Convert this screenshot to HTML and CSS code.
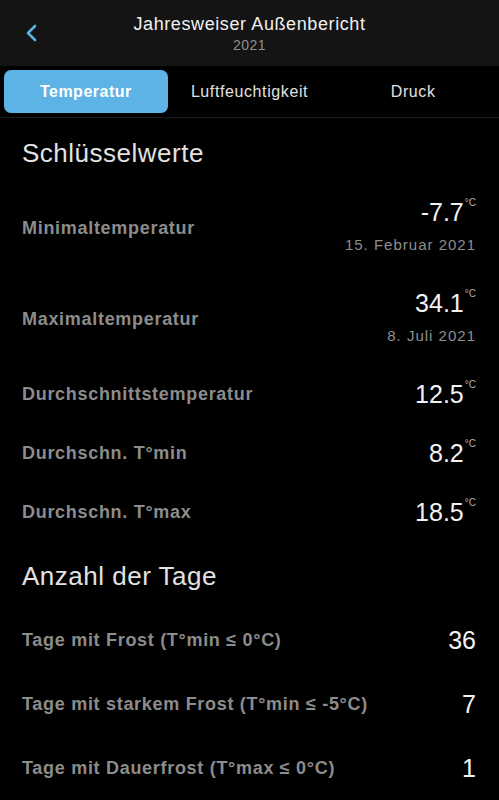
FILE: index.html
```html
<!DOCTYPE html>
<html lang="de">

<head>
  <meta charset="UTF-8">
  <meta name="viewport" content="width=device-width, initial-scale=1.0">
  <title>Jahresweiser Außenbericht</title>
  <link rel="stylesheet" href="styles.css">
</head>

<body>
  <header class="topbar">
    <a class="back" href="#" aria-label="Zurück">
      <svg width="16" height="20" viewBox="0 0 16 20"><polyline points="11,3 4,10 11,17" fill="none" stroke="#5ab2e3" stroke-width="2.6" stroke-linecap="round" stroke-linejoin="round"/></svg>
    </a>
    <div class="title">
      <div class="title-main">Jahresweiser Außenbericht</div>
      <div class="title-sub">2021</div>
    </div>
    <div></div>
  </header>

  <nav class="tabs">
    <div class="tab active">Temperatur</div>
    <div class="tab">Luftfeuchtigkeit</div>
    <div class="tab">Druck</div>
  </nav>

  <main class="content">
    <h2 class="section">Schlüsselwerte</h2>

    <div class="row">
      <div class="label">Minimaltemperatur</div>
      <div class="value-box">
        <div class="value">-7.7<sup>°C</sup></div>
        <div class="date">15. Februar 2021</div>
      </div>
    </div>

    <div class="row">
      <div class="label">Maximaltemperatur</div>
      <div class="value-box">
        <div class="value">34.1<sup>°C</sup></div>
        <div class="date">8. Juli 2021</div>
      </div>
    </div>

    <div class="row">
      <div class="label">Durchschnittstemperatur</div>
      <div class="value">12.5<sup>°C</sup></div>
    </div>

    <div class="row">
      <div class="label">Durchschn. T°min</div>
      <div class="value">8.2<sup>°C</sup></div>
    </div>

    <div class="row">
      <div class="label">Durchschn. T°max</div>
      <div class="value">18.5<sup>°C</sup></div>
    </div>

    <h2 class="section second">Anzahl der Tage</h2>

    <div class="row days">
      <div class="label">Tage mit Frost (T°min ≤ 0°C)</div>
      <div class="value">36</div>
    </div>

    <div class="row days">
      <div class="label">Tage mit starkem Frost (T°min ≤ -5°C)</div>
      <div class="value">7</div>
    </div>

    <div class="row days">
      <div class="label">Tage mit Dauerfrost (T°max ≤ 0°C)</div>
      <div class="value">1</div>
    </div>
  </main>
</body>

</html>
```

FILE: styles.css
```css
body {
  font-family: "Liberation Sans", Arial, sans-serif;
  margin: 0;
  background-color: #000;
  color: #f0f0f0;
  height: 800px;
  overflow: hidden;
}

.topbar {
  background-color: #141414;
  height: 66px;
  box-sizing: border-box;
  padding-top: 13px;
  display: grid;
  grid-template-columns: 60px 1fr 60px;
}

.back {
  display: flex;
  justify-content: center;
  padding-top: 10px;
  padding-left: 4px;
  height: 20px;
}

.title {
  text-align: center;
}

.title-main {
  font-size: 18px;
  line-height: 22px;
  letter-spacing: 0.6px;
  color: #f0f0f0;
}

.title-sub {
  font-size: 14px;
  line-height: 20px;
  letter-spacing: 0.5px;
  color: #8e8e8e;
}

.tabs {
  display: grid;
  grid-template-columns: repeat(3, 1fr);
  padding: 4px;
  border-bottom: 1px solid #1c1c1c;
}

.tab {
  height: 43px;
  line-height: 43px;
  text-align: center;
  font-size: 16px;
  letter-spacing: 0.6px;
  color: #e2e2e2;
  border-radius: 7px;
}

.tab.active {
  background-color: #5db3e5;
  color: #fff;
  font-weight: bold;
  letter-spacing: 0.5px;
}

.content {
  padding: 0 23px 0 22px;
}

.section {
  margin: 0 0 14px 0;
  padding-top: 19px;
  font-size: 26px;
  line-height: 32px;
  font-weight: normal;
  letter-spacing: 0.5px;
  color: #e2e2e2;
}

.section.second {
  padding-top: 18px;
  margin-bottom: 16px;
}

.row {
  display: flex;
  justify-content: space-between;
  align-items: center;
  padding: 14px 0;
}

.row.days {
  padding: 16.5px 0;
}

.label {
  font-size: 18px;
  font-weight: bold;
  letter-spacing: 0.7px;
  color: #8c8c8c;
}

.value-box {
  text-align: right;
}

.value {
  font-size: 25px;
  line-height: 31px;
  color: #f2f2f2;
  text-align: right;
}

.value sup {
  font-size: 10px;
  line-height: 10px;
  vertical-align: top;
  position: relative;
  top: 1px;
  margin-left: 1px;
  color: #b0b0b0;
}

.date {
  font-size: 15px;
  line-height: 26px;
  letter-spacing: 1px;
  margin-top: 4px;
  margin-bottom: 2px;
  color: #8e8e8e;
}
```
